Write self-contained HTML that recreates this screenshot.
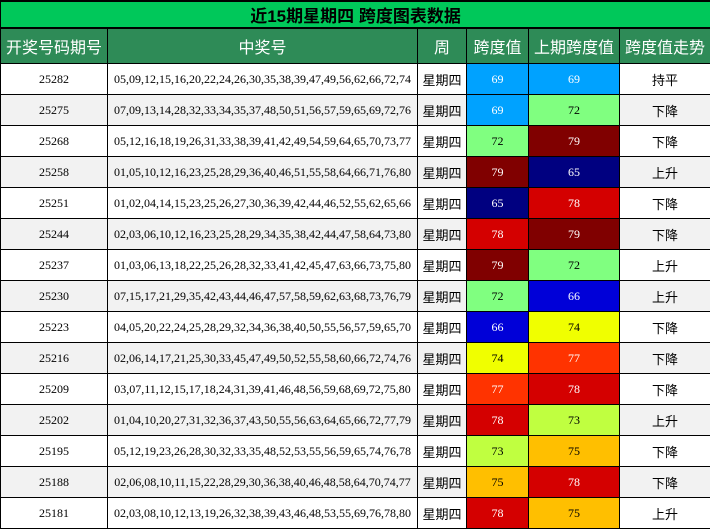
<!DOCTYPE html><html><head><meta charset="utf-8"><style>
body{margin:0;width:710px;height:530px;overflow:hidden;background:#fff;font-family:"Liberation Serif","Noto Sans CJK SC",serif;}
table{border-collapse:collapse;table-layout:fixed;width:710px;}
td,th{border:1px solid #000;text-align:center;padding:0;font-size:12px;color:#000;font-weight:normal;}
.t td{background:#00c85a;height:25px;font-size:17px;font-weight:bold;font-family:"Liberation Sans","Noto Sans CJK SC",sans-serif;border-width:2px 1px 2px 1px;}
.h th{background:#2e8b57;color:#fff;height:34px;font-size:16px;font-family:"Liberation Sans","Noto Sans CJK SC",sans-serif;}
tr.r td{height:30px;}
tr.r:nth-child(even) td{background:#f2f2f2}
td.z{font-size:13px;font-family:"Liberation Sans","Noto Sans CJK SC",sans-serif}
.w{color:#fff!important}
</style></head><body><table>
<colgroup><col style="width:107px"><col style="width:310px"><col style="width:49px"><col style="width:62px"><col style="width:91px"><col style="width:91px"></colgroup>
<tr class="t"><td colspan="6">近15期星期四 跨度图表数据</td></tr>
<tr class="h"><th>开奖号码期号</th><th>中奖号</th><th>周</th><th>跨度值</th><th>上期跨度值</th><th>跨度值走势</th></tr>
<tr class="r"><td>25282</td><td>05,09,12,15,16,20,22,24,26,30,35,38,39,47,49,56,62,66,72,74</td><td class="z">星期四</td><td class="w" style="background:#00a2ff!important">69</td><td class="w" style="background:#00a2ff!important">69</td><td class="z">持平</td></tr>
<tr class="r"><td>25275</td><td>07,09,13,14,28,32,33,34,35,37,48,50,51,56,57,59,65,69,72,76</td><td class="z">星期四</td><td class="w" style="background:#00a2ff!important">69</td><td style="background:#80ff80!important">72</td><td class="z">下降</td></tr>
<tr class="r"><td>25268</td><td>05,12,16,18,19,26,31,33,38,39,41,42,49,54,59,64,65,70,73,77</td><td class="z">星期四</td><td style="background:#80ff80!important">72</td><td class="w" style="background:#800000!important">79</td><td class="z">下降</td></tr>
<tr class="r"><td>25258</td><td>01,05,10,12,16,23,25,28,29,36,40,46,51,55,58,64,66,71,76,80</td><td class="z">星期四</td><td class="w" style="background:#800000!important">79</td><td class="w" style="background:#000080!important">65</td><td class="z">上升</td></tr>
<tr class="r"><td>25251</td><td>01,02,04,14,15,23,25,26,27,30,36,39,42,44,46,52,55,62,65,66</td><td class="z">星期四</td><td class="w" style="background:#000080!important">65</td><td class="w" style="background:#d40000!important">78</td><td class="z">下降</td></tr>
<tr class="r"><td>25244</td><td>02,03,06,10,12,16,23,25,28,29,34,35,38,42,44,47,58,64,73,80</td><td class="z">星期四</td><td class="w" style="background:#d40000!important">78</td><td class="w" style="background:#800000!important">79</td><td class="z">下降</td></tr>
<tr class="r"><td>25237</td><td>01,03,06,13,18,22,25,26,28,32,33,41,42,45,47,63,66,73,75,80</td><td class="z">星期四</td><td class="w" style="background:#800000!important">79</td><td style="background:#80ff80!important">72</td><td class="z">上升</td></tr>
<tr class="r"><td>25230</td><td>07,15,17,21,29,35,42,43,44,46,47,57,58,59,62,63,68,73,76,79</td><td class="z">星期四</td><td style="background:#80ff80!important">72</td><td class="w" style="background:#0000d8!important">66</td><td class="z">上升</td></tr>
<tr class="r"><td>25223</td><td>04,05,20,22,24,25,28,29,32,34,36,38,40,50,55,56,57,59,65,70</td><td class="z">星期四</td><td class="w" style="background:#0000d8!important">66</td><td style="background:#f0ff00!important">74</td><td class="z">下降</td></tr>
<tr class="r"><td>25216</td><td>02,06,14,17,21,25,30,33,45,47,49,50,52,55,58,60,66,72,74,76</td><td class="z">星期四</td><td style="background:#f0ff00!important">74</td><td class="w" style="background:#ff3300!important">77</td><td class="z">下降</td></tr>
<tr class="r"><td>25209</td><td>03,07,11,12,15,17,18,24,31,39,41,46,48,56,59,68,69,72,75,80</td><td class="z">星期四</td><td class="w" style="background:#ff3300!important">77</td><td class="w" style="background:#d40000!important">78</td><td class="z">下降</td></tr>
<tr class="r"><td>25202</td><td>01,04,10,20,27,31,32,36,37,43,50,55,56,63,64,65,66,72,77,79</td><td class="z">星期四</td><td class="w" style="background:#d40000!important">78</td><td style="background:#c0ff40!important">73</td><td class="z">上升</td></tr>
<tr class="r"><td>25195</td><td>05,12,19,23,26,28,30,32,33,35,48,52,53,55,56,59,65,74,76,78</td><td class="z">星期四</td><td style="background:#c0ff40!important">73</td><td style="background:#ffbf00!important">75</td><td class="z">下降</td></tr>
<tr class="r"><td>25188</td><td>02,06,08,10,11,15,22,28,29,30,36,38,40,46,48,58,64,70,74,77</td><td class="z">星期四</td><td style="background:#ffbf00!important">75</td><td class="w" style="background:#d40000!important">78</td><td class="z">下降</td></tr>
<tr class="r"><td>25181</td><td>02,03,08,10,12,13,19,26,32,38,39,43,46,48,53,55,69,76,78,80</td><td class="z">星期四</td><td class="w" style="background:#d40000!important">78</td><td style="background:#ffbf00!important">75</td><td class="z">上升</td></tr>
</table></body></html>
